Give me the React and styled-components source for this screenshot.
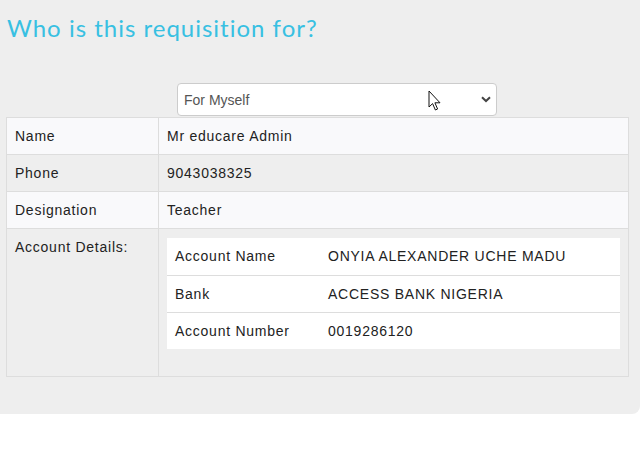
/* React */
import React from 'react';

/* Styles */
import styled, { createGlobalStyle } from 'styled-components';

/* Global */
const GlobalStyle = createGlobalStyle`
    html, body {
        margin: 0;
        padding: 0;
        background: #ffffff;
    }
    * {
        box-sizing: border-box;
    }
`;

/* Styled Components */
const Panel = styled.div`
    position: relative;
    width: 640px;
    height: 414px;
    background: #eeeeee;
    border-bottom-right-radius: 8px;
    padding-top: 12px;
`;

const Heading = styled.h2`
    margin: 0 0 0 7px;
    font-family: Lato, "Open Sans", sans-serif;
    font-weight: 400;
    font-size: 24px;
    line-height: 32px;
    letter-spacing: 1px;
    color: #38c0e2;
`;

const SelectRow = styled.div`
    display: flex;
    margin-top: 39px;
    padding-left: 177px;
`;

const SelectWrap = styled.div`
    position: relative;
    width: 320px;
    height: 33px;
`;

const Select = styled.select`
    appearance: none;
    width: 100%;
    height: 100%;
    padding: 0 6px;
    border: 1px solid #cccccc;
    border-radius: 4px;
    background: #ffffff;
    font-family: "Liberation Sans", Arial, sans-serif;
    font-size: 14px;
    color: #555555;
    outline: none;
`;

const Chevron = styled.svg`
    position: absolute;
    right: 6px;
    top: 13px;
    pointer-events: none;
`;

const Cursor = styled.svg`
    position: absolute;
    left: 428px;
    top: 90px;
    pointer-events: none;
`;

const Table = styled.table`
    margin: 1px 0 0 6px;
    width: 623px;
    border-collapse: collapse;
    font-family: "Liberation Sans", Arial, sans-serif;
    font-size: 14px;
    letter-spacing: 0.75px;
    color: #222222;
`;

const Row = styled.tr`
    background: ${props => props.striped ? '#eeeeee' : '#f9f9fb'};
`;

const Cell = styled.td`
    border: 1px solid #dddddd;
    height: 37px;
    padding: 0 8px;
    vertical-align: ${props => props.top ? 'top' : 'middle'};
    padding-top: ${props => props.top ? '10px' : '0'};
    padding-bottom: ${props => props.pad ? '27px' : '0'};
    width: ${props => props.narrow ? '152px' : 'auto'};
`;

const InnerTable = styled.table`
    width: 100%;
    border-collapse: collapse;
    background: #ffffff;
    margin-top: -1px;
`;

const InnerRow = styled.tr`
    & + & td {
        border-top: 1px solid #dddddd;
    }
`;

const InnerCell = styled.td`
    height: 37px;
    padding: 0 8px;
    width: ${props => props.narrow ? '153px' : 'auto'};
`;

const details = [
    { label: 'Name', value: 'Mr educare Admin' },
    { label: 'Phone', value: '9043038325' },
    { label: 'Designation', value: 'Teacher' },
];

const account = [
    { label: 'Account Name', value: 'ONYIA ALEXANDER UCHE MADU' },
    { label: 'Bank', value: 'ACCESS BANK NIGERIA' },
    { label: 'Account Number', value: '0019286120' },
];

const App = () => {
    return (
        <>
            <GlobalStyle />
            <Panel>
                <Heading>Who is this requisition for?</Heading>
                <SelectRow>
                    <SelectWrap>
                        <Select defaultValue="self">
                            <option value="self">For Myself</option>
                            <option value="other">For Someone Else</option>
                        </Select>
                        <Chevron width="10" height="7" viewBox="0 0 10 7">
                            <path d="M1 1.2 L5 5 L9 1.2" fill="none" stroke="#444" strokeWidth="2" />
                        </Chevron>
                    </SelectWrap>
                </SelectRow>
                <Table>
                    <tbody>
                        {details.map((item, i) => (
                            <Row key={item.label} striped={i % 2 === 1}>
                                <Cell narrow>{item.label}</Cell>
                                <Cell>{item.value}</Cell>
                            </Row>
                        ))}
                        <Row striped>
                            <Cell narrow top>Account Details:</Cell>
                            <Cell top pad>
                                <InnerTable>
                                    <tbody>
                                        {account.map(item => (
                                            <InnerRow key={item.label}>
                                                <InnerCell narrow>{item.label}</InnerCell>
                                                <InnerCell>{item.value}</InnerCell>
                                            </InnerRow>
                                        ))}
                                    </tbody>
                                </InnerTable>
                            </Cell>
                        </Row>
                    </tbody>
                </Table>
                <Cursor width="14" height="22" viewBox="0 0 14 22">
                    <path d="M1 1 L1 17 L4.6 13.6 L7.4 20 L9.6 19 L6.9 12.8 L12 12.8 Z" fill="#ffffff" stroke="#111" strokeWidth="1" strokeLinejoin="round" />
                </Cursor>
            </Panel>
        </>
    );
};

export default App;
